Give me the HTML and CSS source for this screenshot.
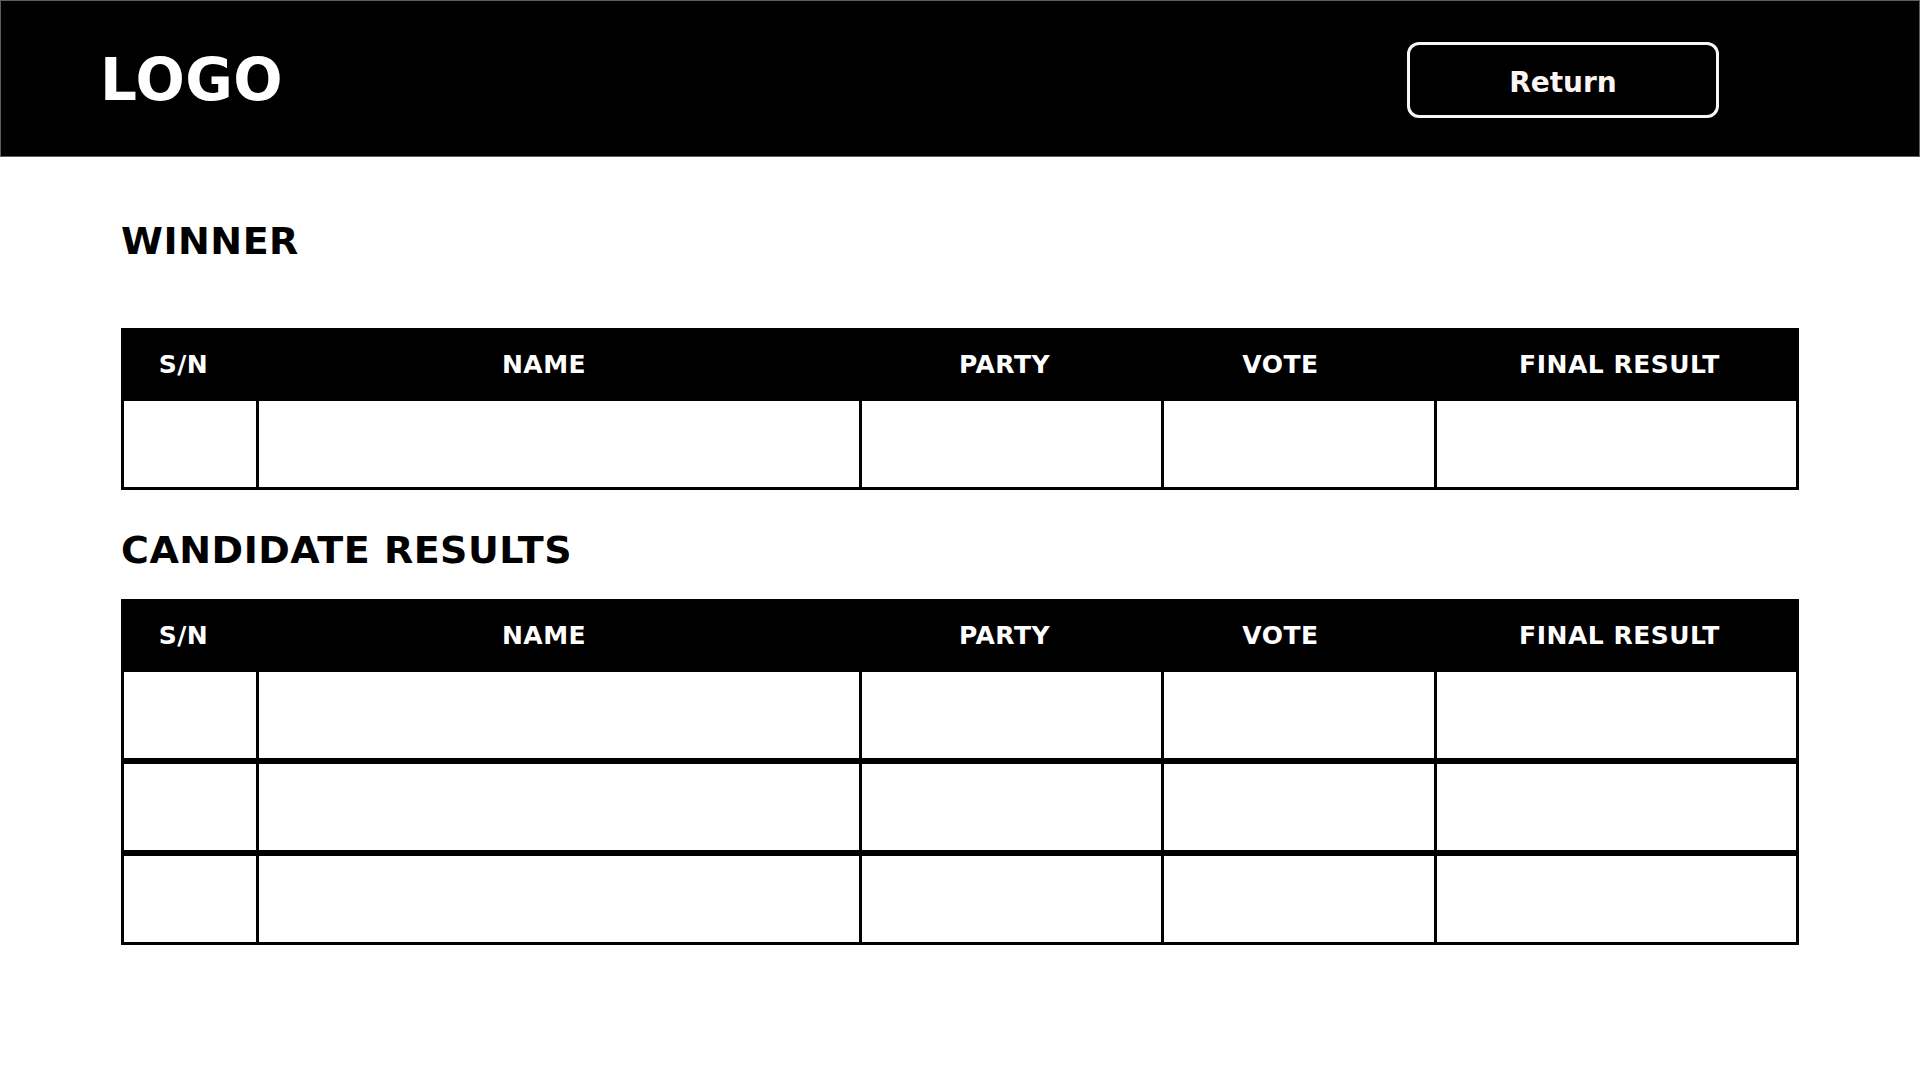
FILE: index.html
```html
<!DOCTYPE html>
<html lang="en">
<head>
<meta charset="utf-8">
<title>Results</title>
<link rel="stylesheet" href="styles.css">
</head>
<body>
<header class="topbar">
  <div class="logo">LOGO</div>
  <button class="return-btn" type="button">Return</button>
</header>
<main class="content">
  <h2 class="section-title winner-title">WINNER</h2>
  <div class="table">
    <div class="row head">
      <div class="cell c1">S/N</div>
      <div class="cell c2">NAME</div>
      <div class="cell c3">PARTY</div>
      <div class="cell c4">VOTE</div>
      <div class="cell c5">FINAL RESULT</div>
    </div>
    <div class="row body">
      <div class="cell"></div><div class="cell"></div><div class="cell"></div><div class="cell"></div><div class="cell"></div>
    </div>
  </div>

  <h2 class="section-title cand-title">CANDIDATE RESULTS</h2>
  <div class="table">
    <div class="row head">
      <div class="cell c1">S/N</div>
      <div class="cell c2">NAME</div>
      <div class="cell c3">PARTY</div>
      <div class="cell c4">VOTE</div>
      <div class="cell c5">FINAL RESULT</div>
    </div>
    <div class="row body">
      <div class="cell"></div><div class="cell"></div><div class="cell"></div><div class="cell"></div><div class="cell"></div>
    </div>
    <div class="row body">
      <div class="cell"></div><div class="cell"></div><div class="cell"></div><div class="cell"></div><div class="cell"></div>
    </div>
    <div class="row body">
      <div class="cell"></div><div class="cell"></div><div class="cell"></div><div class="cell"></div><div class="cell"></div>
    </div>
  </div>
</main>
</body>
</html>
```

FILE: styles.css
```css
* { box-sizing: border-box; }

html, body {
  margin: 0;
  padding: 0;
  background: #ffffff;
  font-family: "DejaVu Sans", "Liberation Sans", sans-serif;
}

.topbar {
  height: 157px;
  background: #000000;
  border: 1px solid #5e5e5e;
  display: flex;
  align-items: center;
  justify-content: space-between;
  padding: 0 200px 0 99px;
}

.logo {
  color: #ffffff;
  font-weight: 700;
  font-size: 58px;
  line-height: 1;
  letter-spacing: 0.5px;
  margin-top: 2px;
}

.return-btn {
  width: 312px;
  height: 76px;
  background: #000000;
  border: 3px solid #fdf5f3;
  border-radius: 12px;
  color: #fdf5f3;
  font-family: "DejaVu Sans", "Liberation Sans", sans-serif;
  font-weight: 700;
  font-size: 28px;
  padding: 5px 0 0;
  margin-top: 2px;
}

.content {
  padding: 0 121px 0 121px;
}

.section-title {
  margin: 0;
  font-weight: 700;
  font-size: 38px;
  line-height: 46px;
  letter-spacing: 0.5px;
  color: #000000;
}

.winner-title {
  padding-top: 61px;
  margin-bottom: 64px;
}

.cand-title {
  margin-top: 37px;
  margin-bottom: 26px;
}

.table {
  display: flex;
  flex-direction: column;
}

.row {
  display: grid;
  grid-template-columns: 135px 603px 302px 273px 1fr;
}

.row.head {
  background: #000000;
  height: 71px;
  padding: 0 3px;
  align-items: center;
}

.row.head .cell {
  color: #ffffff;
  font-weight: 700;
  font-size: 25px;
  letter-spacing: 0.5px;
  text-align: center;
  line-height: 30px;
  padding-top: 3px;
}

.row.head .c1 { padding-right: 16px; }
.row.head .c2 { padding-right: 33px; }
.row.head .c3 { padding-right: 17px; }
.row.head .c4 { padding-right: 40px; }
.row.head .c5 { padding-left: 6px; }

.row.body {
  height: 92px;
  border: 3px solid #000000;
  margin-top: -1px;
}

.row.body + .row.body {
  margin-top: 0;
}

.row.body .cell {
  border-right: 3px solid #000000;
}

.row.body .cell:last-child {
  border-right: none;
}
```
